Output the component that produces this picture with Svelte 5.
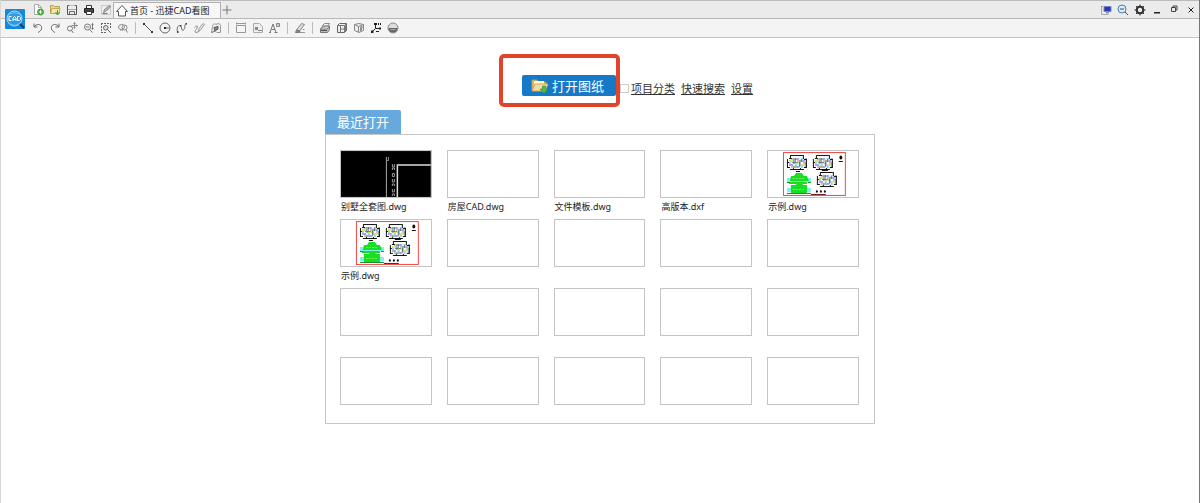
<script lang="ts">
  // [path, stroke, fill] layers on a 12×12 grid
  type Layer = [string, string, string];

  const G = '#666';
  const N = 'none';

  const icons: Record<string, Layer[]> = {
    new: [
      ['M2.5 .5h4l3 3v7h-7z', '#aaa', '#fff'],
      ['M6.500 .5v3h3', '#aaa', N],
      ['M5.500 8a3 3 0 1 0 6 0a3 3 0 1 0-6 0', '#45a63b', '#45a63b'],
      ['M8.500 6.200v3.600M6.700 8h3.600', '#fff', N],
    ],
    open: [
      ['M1.500 9.500v-8h3l1 1h5v3', '#b5a04c', '#ead589'],
      ['M1.500 9.500l1.500-5h8l-1 5z', '#c2ab58', '#f3e7a8'],
      ['M8.500 6v4M6.500 8.500l2 2.500l2-2.500', '#3fa83a', '#3fa83a'],
    ],
    save: [
      ['M1.500 1.500h9v9h-9z', '#555', '#eee'],
      ['M3.500 7.500h5v3h-5z', G, N],
      ['M2 5.500h8', '#aaa', N],
      ['M3 1h6v1h-6z', N, '#bbb'],
    ],
    print: [
      ['M3.500 4v-2.500h5v2.500', '#333', '#fff'],
      ['M1.500 4.500h9v4h-9z', '#222', '#444'],
      ['M3.500 7.500h5v3h-5z', '#333', '#fff'],
    ],
    edit: [
      ['M1.500 1.500h9v9h-9z', '#ccc', '#eee'],
      ['M3.500 8.500l1-3l5-4l1 1.500l-5 4.500z', '#888', '#bbb'],
      ['M2.500 9.500h5', '#777', N],
    ],
    undo: [
      ['M2 1.500v3.500h3.500', G, N],
      ['M2.200 4.800C4 1.500 9.500 1.800 9.700 5.500C9.800 7.800 8 9.500 6 10.500', G, N],
    ],
    redo: [
      ['M10 1.500v3.500h-3.500', G, N],
      ['M9.800 4.800C8 1.500 2.500 1.800 2.300 5.500C2.200 7.800 4 9.500 6 10.500', G, N],
    ],
    pan: [
      ['M1.500 6.500a2.500 2.500 0 1 0 5 0a2.500 2.500 0 1 0-5 0M5.500 8.500l2 2.500', '#777', N],
      ['M8.500 .5v6M5.500 3.500h6M7.500 1.500l1-1l1 1M7.500 5.500l1 1l1-1M10.500 2.500l1 1l-1 1', '#888', N],
    ],
    zoomPan: [
      ['M1.500 5a3 3 0 1 0 6 0a3 3 0 1 0-6 0M6.500 7.500l3 3', '#777', N],
      ['M3 5h3M9.500 1.500v6M8.500 2.500l1-1l1 1M8.500 6.500l1 1l1-1', '#777', N],
    ],
    zoomBox: [
      ['M1 1.500h2M4 1.500h2M7 1.500h2M10.500 1v2M10.500 4v2M1.500 1v2M1.500 4v2M1.500 7v2M1 10.500h2M4 10.500h2', G, N],
      ['M3.500 5.800a2.300 2.300 0 1 0 4.600 0a2.300 2.300 0 1 0-4.600 0M7.500 7.500l3.500 3.500', G, '#ddd'],
    ],
    zoomAll: [
      ['M1.500 5a3 2.500 0 1 0 6 0a3 2.500 0 1 0-6 0', '#888', N],
      ['M5 5.500a2.500 2.500 0 1 0 5 0a2.500 2.500 0 1 0-5 0M9 7.500l1.500 3M3 8h3', '#888', N],
    ],
    line: [['M2 2l8 8', '#555', N], ['M1 1h2v2h-2zM9 9h2v2h-2z', N, '#333']],
    circle: [
      ['M1 6a5 5 0 1 0 10 0a5 5 0 1 0-10 0M6 6h4', '#666', N],
      ['M5 5h2v2h-2z', N, '#222'],
    ],
    curve: [
      ['M1.500 10C0 4 4 2 5 4.500S6 10 8 7.500S7.500 3 10.500 1.500', '#666', N],
      ['M1 9h1.500v2h-1.500zM4 3h1.500v1.500h-1.500zM9.500 1h1.500v1.500h-1.500z', N, '#444'],
    ],
    sketch: [
      ['M1.500 5.500C5 2.500 5.500 4 3 7.500S3.500 11.500 7 8.500', '#888', N],
      ['M5.500 8.500l.5-2l4-5l1.500 1l-4 5.500z', '#999', '#eee'],
    ],
    cloud: [
      ['M1.500 10.500l1-6C2.500 2 5 1 6 2.500C8.500 .5 11.500 2.500 10.500 5v5.500h-4', '#999', '#eee'],
      ['M4 5.500l4-1v2.500l-3 2z', '#555', '#888'],
      ['M1.500 10.500l4-1.500', '#666', N],
    ],
    frame: [['M1.500 10.500v-7h9v7zM1 1.500h10M1.500 .5v2M10.500 .5v2', '#999', '#f5f5f5']],
    note: [
      ['M1.500 1.500h6l3 3v6h-9z', '#aaa', '#eee'],
      ['M3 5h3v3h-3zM6 8h4v1h-4z', N, '#888'],
    ],
    text: [
      ['M1 10.500l3-8.500l3 8.500M2.500 7.500h3.500M0 10.500h2M5.500 10.500h3', '#777', N],
      ['M7.500 1.500h3v3h-3z', '#888', '#ccc'],
    ],
    eraser: [
      ['M2.500 8l5-6.500l3 1l-5 6.500z', '#888', '#ddd'],
      ['M2.500 8l-1 2.500h4l.5-1.500z', '#777', '#888'],
      ['M6 10.500h5M8.500 7.500h2', '#999', N],
    ],
    layers: [
      ['M3.500 3.500l2-2h5l-2 3h-5z', '#888', '#eee'],
      ['M1.500 7l2.500-3h6.500l-2.500 3zM1.500 7v3.500h7l2-3v-3', '#777', '#bbb'],
      ['M2 8.500h6', '#555', N],
    ],
    cube: [
      ['M1.500 3.500l2-2h7v7l-2 2h-7z', '#666', '#eee'],
      ['M1.500 3.500h7v7M8.500 3.500l2-2M4.500 3.500v7M4.500 7h4', '#777', N],
      ['M9 4l1.500-2v6l-1.500 2z', N, '#777'],
    ],
    view3d: [
      ['M1.500 2.500l4.500-1l4.500 1v6l-4.500 2l-4.500-2z', '#888', '#eee'],
      ['M1.500 2.500l4 2v6M5.500 4.500l5-2', '#888', N],
      ['M7 5.500l2-1v1.500l-2 1l2 .5l-2 1.500', '#777', N],
    ],
    axes: [
      ['M5.500 1.500v5M5.500 6.500h5M5.500 6.500l-4 4', '#222', N],
      ['M4 1h3v2h-3zM1 8.500h2.500v2.500h-2.500zM9 5.500h2v2h-2zM8 1h1v2h-1zM10 1h1v2h-1zM6 9h3v1h-3z', N, '#222'],
    ],
    shade: [
      ['M1 6a5 5 0 1 0 10 0a5 5 0 1 0-10 0', '#888', '#ddd'],
      ['M1.500 6h9a4.500 4.500 0 0 1-9 0z', N, '#666'],
      ['M3.500 7.500h5', '#aaa', N],
    ],
    home: [['M.5 6.500l5.500-6l5.500 6h-2v4.500h-7v-4.500z', '#555', '#fff']],
    plus: [['M6 1.500v9M1.500 6h9', '#777', N]],
    screen: [
      ['M4 2.500h7v5h-7z', '#7a84c8', '#2c3bb4'],
      ['M1.500 2.500v8M1.500 10.500h7', '#aaa', N],
      ['M6 8h3v1.500h-3zM1 2h2v1h-2z', N, '#8b93b5'],
    ],
    find: [
      ['M1 5a4 4 0 1 0 8 0a4 4 0 1 0-8 0', '#4a7fa8', '#dcecf7'],
      ['M3 5h4M8 8l3 3', '#2d4f78', N],
    ],
    gear: [
      ['M6 .5v11M.5 6h11M2.100 2.100l7.800 7.800M9.900 2.100l-7.800 7.800', '#333', N],
      ['M2 6a4 4 0 1 0 8 0a4 4 0 1 0-8 0', '#333', '#333'],
      ['M3.800 6a2.200 2.200 0 1 0 4.400 0a2.200 2.200 0 1 0-4.400 0', N, '#eee'],
    ],
    minimize: [['M3 8h6v1.500h-6z', N, '#222']],
    restore: [['M3.500 3.500h4v4h-4zM5 3.500v-1.500h4v4h-1.500', '#444', N]],
    close: [['M3.500 3.500l5 5M8.500 3.500l-5 5', '#222', N]],
  };

  const quick = [['new', '新建'], ['open', '打开'], ['save', '保存'], ['print', '打印'], ['edit', '编辑']];
  const system = [['screen', '屏幕'], ['find', '查找'], ['gear', '选项'], ['minimize', '最小化'], ['restore', '还原'], ['close', '关闭']];
  const tools = [
    [['undo', '撤销'], ['redo', '重做'], ['pan', '平移'], ['zoomPan', '缩放'], ['zoomBox', '窗口缩放'], ['zoomAll', '全图']],
    [['line', '直线'], ['circle', '圆'], ['curve', '曲线'], ['sketch', '手绘'], ['cloud', '云线']],
    [['frame', '标注'], ['note', '注释'], ['text', '文字']],
    [['eraser', '擦除']],
    [['layers', '图层'], ['cube', '立方体'], ['view3d', '视图'], ['axes', '坐标'], ['shade', '着色']],
  ];

  type Recent = { name: string; art: 'villa' | 'sample' | '' };
  const recent: Recent[] = [
    { name: '别墅全套图.dwg', art: 'villa' },
    { name: '房屋CAD.dwg', art: '' },
    { name: '文件模板.dwg', art: '' },
    { name: '高版本.dxf', art: '' },
    { name: '示例.dwg', art: 'sample' },
    { name: '示例.dwg', art: 'sample' },
  ];
  const slots: (Recent | null)[] = Array.from({ length: 20 }, (_, i) => recent[i] ?? null);

  // coloured room fill of a floor plan, 9×5 tiles
  const ROOMS = ['#fff', '#e6e04a', '#7fdce8', '#b8a0e0', '#d8f5ff', '#70c860', '#8fa6e0', '#f0a8c8', '#c8e8a0'];
  const rooms = Array.from({ length: 45 }, (_, i) => ({
    x: 3 + (i % 9) * 2,
    y: 3 + Math.floor(i / 9) * 2,
    fill: ROOMS[(i * 7 + Math.floor(i / 4) * 5) % ROOMS.length],
  }));

  let classify = $state(false);
</script>

{#snippet icon(name: string)}
  <svg class="icon" viewBox="0 0 12 12" aria-hidden="true">
    {#each icons[name] as [d, stroke, fill]}
      <path {d} {stroke} {fill} />
    {/each}
  </svg>
{/snippet}

{#snippet tool(name: string, label: string)}
  <button class="tool" aria-label={label}>{@render icon(name)}</button>
{/snippet}

{#snippet folder()}
  <svg class="folder" viewBox="0 0 18 16" aria-hidden="true">
    <path d="M1 12V2h5l1 2h8v3" fill="#d8bd72" stroke="#b99d50" />
    <path d="M3 3h10v4H3z" fill="#fff6cf" />
    <path d="M1 13l3-7h13l-3 7z" fill="#f2dda0" stroke="#c9ad62" />
    <path d="M9 11h2.500V8h3v3H17l-4 4.500z" fill="#52bb45" stroke="#2f8f35" stroke-width=".6" />
  </svg>
{/snippet}

{#snippet plan(x: number, y: number)}
  <g transform="translate({x} {y})">
    {#each rooms as r}
      <rect x={r.x} y={r.y} width="2" height="2" fill={r.fill} />
    {/each}
    <path d="M5 .5h12M4.500 0v3M17.500 0v4M1.500 4v8M3 3.500h3M1 7.500h2M1 12.500h3M4 14.500h14M20.500 4v8M18 4.500h3M18 12.500h3M7.500 13v2M14.500 13v2" fill="none" stroke="#111" />
    <path d="M9.500 3v4M6 7.500h6M13.500 7v5M15.500 4v3" fill="none" stroke="#444" stroke-width=".6" />
  </g>
{/snippet}

{#snippet sample()}
  <svg class="art" viewBox="0 0 90 46" aria-hidden="true">
    <rect x="15.500" y="1.500" width="62" height="43" fill="#fff" stroke="#f04a48" />
    {@render plan(18, 4)}
    {@render plan(44, 4)}
    {@render plan(48, 21)}
    <path d="M19 27h24v4H19zM19 37h24v4H19z" fill="#7ff0ec" />
    <path d="M22 30l1-5h3l2-3h6l2 3h3l2 5zM21 31h18v2H21zM23 34h4l2-1h5l2 1h3v9H23z" fill="#19df23" />
    <path d="M19 31.500h3M40 31.500h3M19 42.500h24" stroke="#168c3a" />
    <path d="M25 27.500h12M25 38.500h12" stroke="#7dea5a" stroke-dasharray="2 1" />
    <path d="M28 20.500h4M54 19.500h6" stroke="#111" />
    <ellipse cx="73" cy="6.500" rx="1.500" ry="2" fill="#111" />
    <path d="M71 10.500h4" stroke="#111" />
    <path d="M48 40.500h2M52 40.500h2M56 40.500h2M49 39v3M53 39v3M57 39v3" stroke="#111" />
    <path d="M43 43.500h15" stroke="#6b1515" />
  </svg>
{/snippet}

{#snippet villa()}
  <svg class="art" viewBox="0 0 90 46" aria-hidden="true">
    <rect width="90" height="46" fill="#000" />
    <path d="M45.500 6v40" stroke="#aaa" />
    <path d="M45.500 9.500h2V6" fill="none" stroke="#888" />
    <path d="M56.500 46V14H90" fill="none" stroke="#ddd" stroke-width="1.500" />
    <path d="M51.500 13v3h2v-3M51.500 19v-2h2v2M51.500 22.500h2v3h-2zM51.500 28v3h2v-3M51.500 35v-2h2v2M51.500 38v3h2v-3M51.500 45v-2h2v2" fill="none" stroke="#999" />
  </svg>
{/snippet}

<div class="app">
  <header>
    <div class="titlebar">
      <nav class="group">
        {#each quick as [name, label]}
          {@render tool(name, label)}
        {/each}
      </nav>
      <button class="doc">{@render icon('home')}<span>首页 - 迅捷CAD看图</span></button>
      <button class="tool add" aria-label="新标签">{@render icon('plus')}</button>
      <div class="group system">
        {#each system as [name, label]}
          {@render tool(name, label)}
        {/each}
      </div>
    </div>
    <div class="toolbar">
      {#each tools as group, i}
        {#if i > 0}<span class="sep"></span>{/if}
        {#each group as [name, label]}
          {@render tool(name, label)}
        {/each}
      {/each}
    </div>
    <svg class="logo" viewBox="0 0 20 20" aria-hidden="true">
      <rect width="20" height="20" rx="1" fill="#1688dc" />
      <circle cx="9.500" cy="9.500" r="7.500" fill="#2e9ae6" stroke="#a9dcfa" />
      <path d="M3 6.500C6 3 13 3 16 6.500M4 14c3 3 8 3 11 0" fill="none" stroke="#7cc6f5" />
      <path d="M6.500 7.500H4v4h2.500M8 12V9l1.500-1.500L11 9v3M8 10.500h3M12.500 7.500v4h2l1-1v-2l-1-1z" fill="none" stroke="#fff" />
      <path d="M15 15l4 4" stroke="#123f6b" stroke-width="2" />
    </svg>
  </header>

  <main>
    <div class="actions">
      <div class="marked">
        <button class="open">{@render folder()}<span>打开图纸</span></button>
      </div>
      <div class="options">
        <label><input type="checkbox" bind:checked={classify} /><span>项目分类</span></label>
        <a href="#search">快速搜索</a>
        <a href="#settings">设置</a>
      </div>
    </div>

    <button class="tab">最近打开</button>
    <section class="panel">
      {#each slots as slot}
        <figure>
          <div class="thumb">
            {#if slot?.art === 'villa'}
              {@render villa()}
            {:else if slot?.art === 'sample'}
              {@render sample()}
            {/if}
          </div>
          {#if slot}<figcaption>{slot.name}</figcaption>{/if}
        </figure>
      {/each}
    </section>
  </main>
</div>

<style>
  :global(body) {
    margin: 0;
    background: #fff;
  }

  .app {
    box-sizing: border-box;
    min-height: 100vh;
    border-left: 1px solid #d8d8d8;
    border-right: 1px solid #777;
    font-family: 'Noto Sans', 'Noto Sans CJK SC', sans-serif;
    color: #333;
  }

  button {
    margin: 0;
    padding: 0;
    border: 0;
    background: none;
    font: inherit;
    color: inherit;
  }

  header {
    display: grid;
    grid-template-columns: 31px 1fr;
    grid-template-rows: 19px 18px;
    border-bottom: 1px solid #c4c4c4;
  }

  .titlebar,
  .toolbar {
    grid-column: 1 / 3;
    display: flex;
    align-items: center;
    box-sizing: border-box;
    padding-left: 31px;
  }

  .titlebar {
    grid-row: 1;
    background: #ebebeb;
    border-top: 1px solid #bbb;
    border-bottom: 1px solid #b8b8b8;
    padding-right: 2px;
  }

  .toolbar {
    grid-row: 2;
    gap: 5px;
    background: #f4f4f4;
  }

  .logo {
    grid-area: 1 / 1 / 3 / 2;
    place-self: center start;
    width: 20px;
    height: 20px;
    margin-left: 4px;
  }

  .group {
    display: flex;
    gap: 5px;
  }

  .system {
    margin-left: auto;
  }

  .tool {
    display: flex;
    flex: none;
  }

  .icon {
    display: block;
    flex: none;
    width: 12px;
    height: 12px;
  }

  .sep {
    width: 1px;
    height: 12px;
    margin: 0 1px;
    background: #bbb;
  }

  .doc {
    display: flex;
    align-items: center;
    align-self: flex-end;
    gap: 2px;
    box-sizing: border-box;
    height: 16px;
    margin-left: 1px;
    padding: 0 10px 0 2px;
    border: 1px solid #b0b0b0;
    border-bottom: 0;
    background: #f7f7f7;
    font-size: 9px;
    line-height: 14px;
    white-space: nowrap;
    color: #222;
  }

  main {
    width: 550px;
    max-width: 100%;
    margin: 0 auto;
    padding: 16px 0 24px;
  }

  .actions {
    display: flex;
    align-items: center;
    padding-left: 174px;
  }

  .marked {
    flex: none;
    padding: 17px 0 7px 19px;
    border: 4px solid #e0452b;
    border-radius: 5px;
  }

  .open {
    display: flex;
    align-items: center;
    gap: 3px;
    height: 21px;
    padding: 0 12px 0 9px;
    border-radius: 2px;
    background: #1579c8;
    color: #fff;
    font-size: 13px;
    line-height: 20px;
    white-space: nowrap;
  }

  .folder {
    width: 18px;
    height: 16px;
  }

  .options {
    display: flex;
    gap: 6px;
    padding-top: 16px;
    font-size: 11px;
    line-height: 16px;
    white-space: nowrap;
  }

  .options label {
    display: flex;
    align-items: center;
    gap: 2px;
    text-decoration: underline;
  }

  .options input {
    appearance: none;
    box-sizing: border-box;
    width: 9px;
    height: 9px;
    margin: 0;
    border: 1px solid #ccc;
    background: #fff;
  }

  .options input:checked {
    background: #1579c8;
  }

  .options a {
    color: inherit;
  }

  .tab {
    display: block;
    height: 24px;
    margin-top: 3px;
    padding: 0 12px;
    border-radius: 2px 2px 0 0;
    background: #67a9dc;
    color: #fff;
    font-size: 13px;
    line-height: 24px;
  }

  .panel {
    display: grid;
    grid-template-columns: repeat(5, 1fr);
    grid-template-rows: repeat(3, 69px) auto;
    column-gap: 15px;
    padding: 15px 15px 18px 14px;
    border: 1px solid #c6c6c6;
  }

  figure {
    margin: 0;
  }

  .thumb {
    box-sizing: border-box;
    height: 48px;
    border: 1px solid #c4c4c4;
  }

  .art {
    display: block;
    width: 100%;
    height: 100%;
  }

  figcaption {
    padding: 2px 0 0 1px;
    font-size: 9px;
    line-height: 14px;
    white-space: nowrap;
    color: #222;
  }
</style>
